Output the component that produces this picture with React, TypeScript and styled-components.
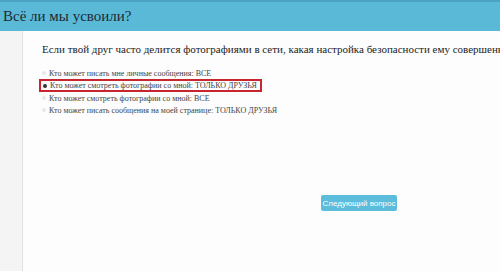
import React from "react";
import styled, { createGlobalStyle } from "styled-components";

const SERIF = `"Times New Roman", "Liberation Serif", Tinos, serif`;

const Global = createGlobalStyle`
  html, body { margin: 0; padding: 0; background: #fdfdfd; }
  body {
    width: 500px;
    height: 271px;
    overflow: hidden;
    font-family: ${SERIF};
  }
`;

const Page = styled.div`
  width: 500px;
  height: 271px;
  display: flex;
  flex-direction: column;
`;

const Header = styled.div`
  box-sizing: border-box;
  flex: 0 0 31px;
  height: 31px;
  border-top: 2px solid #4aa3c4;
  background: #5ab9d7;
  display: flex;
  align-items: center;
  padding-left: 3px;
  font-family: ${SERIF};
  font-size: 15px;
  color: #1f2a33;
`;

const Body = styled.div`
  flex: 1 1 auto;
  display: flex;
  flex-direction: row;
  align-items: stretch;
`;

const Side = styled.div`
  flex: 0 0 22px;
  width: 22px;
  background: #f4f4f4;
  border-right: 1px solid #e2e2e2;
`;

const Main = styled.div`
  flex: 1 1 auto;
  min-width: 0;
  background: #fdfdfd;
  padding: 11px 0 0 19px;
  display: flex;
  flex-direction: column;
  font-family: ${SERIF};
  color: #222;
`;

const Question = styled.div`
  font-size: 11px;
  line-height: 14px;
  white-space: nowrap;
  margin-bottom: 11px;
`;

const Options = styled.div`
  display: flex;
  flex-direction: column;
`;

const Option = styled.label<{ $marked?: boolean }>`
  box-sizing: border-box;
  display: flex;
  align-items: center;
  align-self: flex-start;
  height: 12px;
  font-size: 8px;
  color: #444;
  white-space: nowrap;
  padding: 0 3px 0 ${(p) => (p.$marked ? "2px" : "0")};
  margin-left: ${(p) => (p.$marked ? "-3px" : "0")};
  margin-top: ${(p) => (p.$marked ? "0" : "0")};
  border: ${(p) => (p.$marked ? "2px solid #c8262e" : "0 solid transparent")};
  height: ${(p) => (p.$marked ? "13px" : "12px")};
`;

const Radio = styled.span<{ $checked?: boolean }>`
  flex: 0 0 4px;
  width: 4px;
  height: 4px;
  border-radius: 50%;
  margin-right: 3px;
  background: ${(p) => (p.$checked ? "#333" : "#e8e8e8")};
`;

const ButtonRow = styled.div`
  display: flex;
  padding-left: 279px;
  margin-top: 79px;
`;

const NextButton = styled.button`
  width: 76px;
  height: 16px;
  border: none;
  border-radius: 2px;
  background: #5bbcdc;
  color: #fff;
  font-family: "Liberation Sans", Arial, sans-serif;
  font-size: 8px;
  padding: 0;
`;

const options = [
  { text: "Кто может писать мне личные сообщения: ВСЕ" },
  { text: "Кто может смотреть фотографии со мной: ТОЛЬКО ДРУЗЬЯ", checked: true },
  { text: "Кто может смотреть фотографии со мной: ВСЕ" },
  { text: "Кто может писать сообщения на моей странице: ТОЛЬКО ДРУЗЬЯ" },
];

export default function App() {
  return (
    <>
      <Global />
      <Page>
        <Header>Всё ли мы усвоили?</Header>
        <Body>
          <Side />
          <Main>
            <Question>
              Если твой друг часто делится фотографиями в сети, какая настройка безопасности ему совершенно необходима?
            </Question>
            <Options>
              {options.map((o) => (
                <Option key={o.text} $marked={o.checked}>
                  <Radio $checked={o.checked} />
                  {o.text}
                </Option>
              ))}
            </Options>
            <ButtonRow>
              <NextButton>Следующий вопрос</NextButton>
            </ButtonRow>
          </Main>
        </Body>
      </Page>
    </>
  );
}
